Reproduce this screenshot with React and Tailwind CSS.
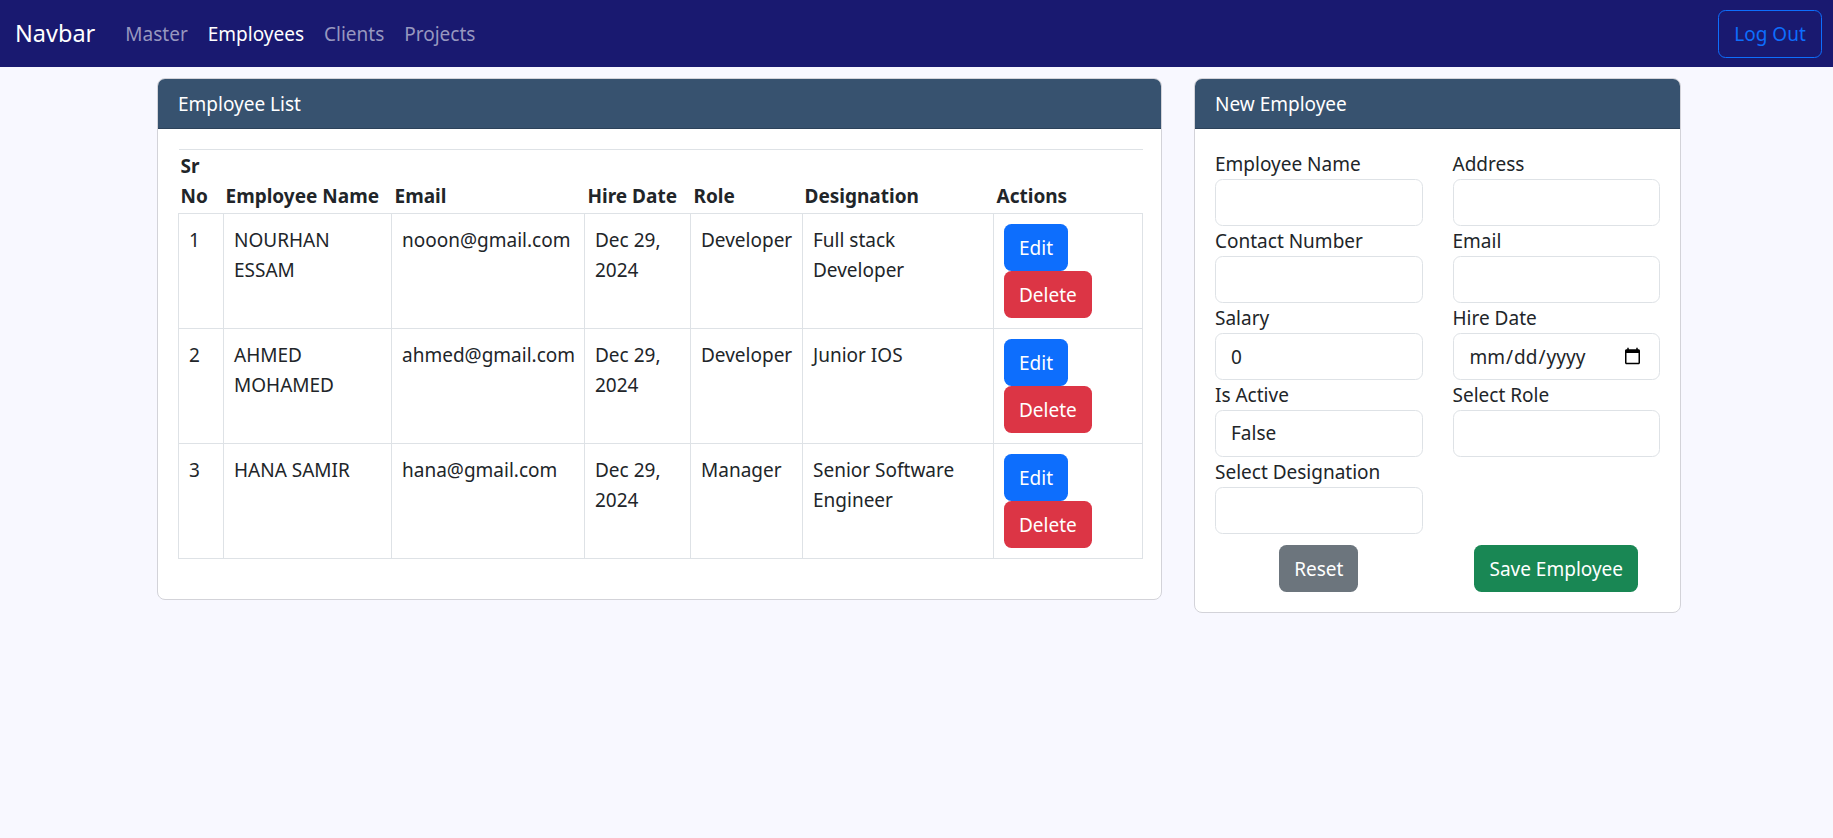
import React from "react";

const employees = [
  { id: 1, name: "NOURHAN ESSAM", email: "nooon@gmail.com", hire: "Dec 29, 2024", role: "Developer", designation: "Full stack Developer" },
  { id: 2, name: "AHMED MOHAMED", email: "ahmed@gmail.com", hire: "Dec 29, 2024", role: "Developer", designation: "Junior IOS" },
  { id: 3, name: "HANA SAMIR", email: "hana@gmail.com", hire: "Dec 29, 2024", role: "Manager", designation: "Senior Software Engineer" },
];

const Card = ({ title, className, children }) => (
  <div className={`bg-white border border-[#d3d3d9] rounded-[8px] overflow-hidden ${className}`}>
    <div className="h-[50px] px-[20px] py-[10px] bg-[#37526f] text-white border-b border-[#2c425a]">{title}</div>
    <div className="p-[20px]">{children}</div>
  </div>
);

const Field = ({ label, children }) => (
  <div>
    <label className="block">{label}</label>
    {children}
  </div>
);

const inputCls =
  "block w-full h-[47px] px-[15px] bg-white border border-[#dee2e6] rounded-[7.5px] text-[19px] text-[#212529] outline-none";

export default function App() {
  return (
    <div className="min-h-screen bg-[#f8f8ff] font-['Segoe_UI','Noto_Sans',sans-serif] text-[19px] leading-[30px] text-[#212529]">
      {/* Navbar */}
      <nav className="h-[67px] bg-[#191970] flex items-center justify-between pl-[15px] pr-[11px]">
        <div className="flex items-center">
          <span className="text-[23.5px] leading-[37px] text-white mr-[20px]">Navbar</span>
          <a className="px-[10px] text-[#9797bf]">Master</a>
          <a className="px-[10px] text-white">Employees</a>
          <a className="px-[10px] text-[#9797bf]">Clients</a>
          <a className="px-[10px] text-[#9797bf]">Projects</a>
        </div>
        <button className="h-[48px] w-[104px] border border-[#0d6efd] text-[#0d6efd] rounded-[7.5px]">Log Out</button>
      </nav>

      <main className="flex items-start gap-[32px] pl-[157px] pt-[11px]">
        {/* Employee list */}
        <Card title="Employee List" className="w-[1005px]">
          <table className="w-full table-fixed border-collapse border-t border-[#dee2e6] mb-[20px]">
            <colgroup>
              <col className="w-[45px]" />
              <col className="w-[168px]" />
              <col className="w-[193px]" />
              <col className="w-[106px]" />
              <col className="w-[112px]" />
              <col className="w-[191px]" />
              <col className="w-[149px]" />
            </colgroup>
            <thead>
              <tr className="font-bold text-left align-bottom">
                <th className="px-[2px] pt-[1px] pb-[2px]">Sr No</th>
                <th className="px-[2px] pt-[1px] pb-[2px]">Employee Name</th>
                <th className="px-[3px] pt-[1px] pb-[2px]">Email</th>
                <th className="px-[3px] pt-[1px] pb-[2px]">Hire Date</th>
                <th className="px-[3px] pt-[1px] pb-[2px]">Role</th>
                <th className="px-[2px] pt-[1px] pb-[2px]">Designation</th>
                <th className="px-[3px] pt-[1px] pb-[2px]">Actions</th>
              </tr>
            </thead>
            <tbody>
              {employees.map((e) => (
                <tr key={e.id} className="align-top">
                  <td className="border border-[#dee2e6] p-[10px] pt-[11px]">{e.id}</td>
                  <td className="border border-[#dee2e6] p-[10px] pt-[11px]">{e.name}</td>
                  <td className="border border-[#dee2e6] p-[10px] pt-[11px] whitespace-nowrap">{e.email}</td>
                  <td className="border border-[#dee2e6] p-[10px] pt-[11px]">{e.hire}</td>
                  <td className="border border-[#dee2e6] p-[10px] pt-[11px]">{e.role}</td>
                  <td className="border border-[#dee2e6] p-[10px] pt-[11px]">{e.designation}</td>
                  <td className="border border-[#dee2e6] p-[10px]">
                    <div className="flex flex-col items-start">
                      <button className="h-[47px] px-[15px] bg-[#0d6efd] text-white rounded-[7.5px]">Edit</button>
                      <button className="h-[47px] px-[15px] bg-[#dc3545] text-white rounded-[7.5px]">Delete</button>
                    </div>
                  </td>
                </tr>
              ))}
            </tbody>
          </table>
        </Card>

        {/* New employee form */}
        <Card title="New Employee" className="w-[487px]">
          <div className="grid grid-cols-2 gap-x-[30px]">
            <Field label="Employee Name"><input className={inputCls} /></Field>
            <Field label="Address"><input className={inputCls} /></Field>
            <Field label="Contact Number"><input className={inputCls} /></Field>
            <Field label="Email"><input className={inputCls} /></Field>
            <Field label="Salary"><input className={inputCls} defaultValue="0" /></Field>
            <Field label="Hire Date"><input type="date" className={inputCls} /></Field>
            <Field label="Is Active"><div className={`${inputCls} leading-[45px]`}>False</div></Field>
            <Field label="Select Role"><div className={inputCls} /></Field>
            <Field label="Select Designation"><div className={inputCls} /></Field>
          </div>
          <div className="grid grid-cols-2 gap-x-[30px] mt-[11px]">
            <div className="flex justify-center">
              <button className="h-[47px] px-[15px] bg-[#6c757d] text-white rounded-[7.5px]">Reset</button>
            </div>
            <div className="flex justify-center">
              <button className="h-[47px] px-[15px] bg-[#198754] text-white rounded-[7.5px]">Save Employee</button>
            </div>
          </div>
        </Card>
      </main>
    </div>
  );
}
